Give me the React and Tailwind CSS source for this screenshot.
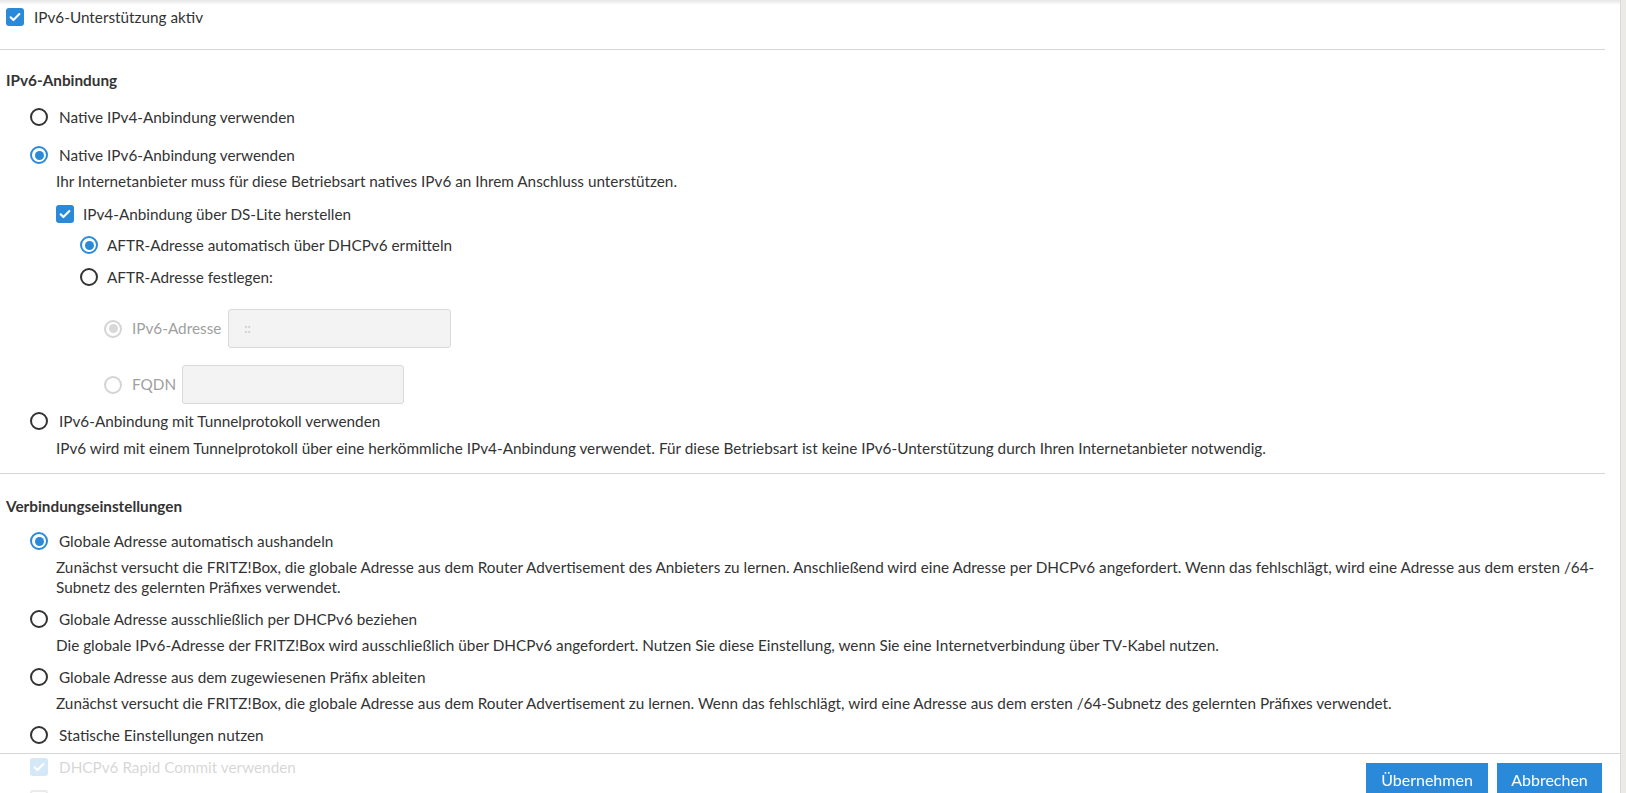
import React from 'react';

const Checkbox = ({ checked = true }) => (
  <span
    className={`flex h-[18px] w-[18px] shrink-0 items-center justify-center rounded-[3px] ${
      checked ? 'bg-[#2a8ad9]' : 'border-2 border-[#9a9a9a] bg-white'
    }`}
  >
    {checked && (
      <svg viewBox="0 0 16 16" className="h-[14px] w-[14px]" fill="none" stroke="white" strokeWidth="2.4" strokeLinecap="round" strokeLinejoin="round">
        <path d="M3 8.3l3.2 3.2L13 4.6" />
      </svg>
    )}
  </span>
);

const Radio = ({ checked = false, disabled = false }) => {
  const ring = disabled ? 'border-[#d4d4d4]' : checked ? 'border-[#2a8ad9]' : 'border-[#333]';
  const dot = disabled ? 'bg-[#d8d8d8]' : 'bg-[#2a8ad9]';
  return (
    <span className={`flex h-[18px] w-[18px] shrink-0 items-center justify-center rounded-full border-2 bg-white ${ring}`}>
      {checked && <span className={`h-[9px] w-[9px] rounded-full ${dot}`} />}
    </span>
  );
};

const Row = ({ className = '', children }) => (
  <div className={`flex h-5 items-center ${className}`}>{children}</div>
);

const Desc = ({ className = '', children }) => (
  <p className={`pl-[56px] leading-5 ${className}`}>{children}</p>
);

export default function App() {
  return (
    <div className="relative flex min-h-screen bg-white font-['Lato','Liberation_Sans',sans-serif] text-[15.3px] text-[#333]">
      <div className="pointer-events-none absolute left-0 right-[6px] top-0 h-[5px] bg-gradient-to-b from-[#e6e6e6] to-transparent" />

      <main className="w-[1605px] shrink-0 pb-[60px]">
        <Row className="mt-[7px] gap-[10px] pl-[6px]">
          <Checkbox />
          <span>IPv6-Unterstützung aktiv</span>
        </Row>

        <hr className="mt-[22px] border-t border-[#d6d6d6]" />

        <h2 className="mt-[20px] pl-[6px] font-bold leading-5">IPv6-Anbindung</h2>

        <Row className="mt-[17px] gap-[11px] pl-[30px]">
          <Radio />
          <span>Native IPv4-Anbindung verwenden</span>
        </Row>
        <Row className="mt-[18px] gap-[11px] pl-[30px]">
          <Radio checked />
          <span>Native IPv6-Anbindung verwenden</span>
        </Row>
        <Desc className="mt-[6px]">Ihr Internetanbieter muss für diese Betriebsart natives IPv6 an Ihrem Anschluss unterstützen.</Desc>

        <Row className="mt-[13px] gap-[9px] pl-[56px]">
          <Checkbox />
          <span>IPv4-Anbindung über DS-Lite herstellen</span>
        </Row>
        <Row className="mt-[11px] gap-[9px] pl-[80px]">
          <Radio checked />
          <span>AFTR-Adresse automatisch über DHCPv6 ermitteln</span>
        </Row>
        <Row className="mt-[12px] gap-[9px] pl-[80px]">
          <Radio />
          <span>AFTR-Adresse festlegen:</span>
        </Row>

        <div className="mt-[22px] flex items-center pl-[104px]">
          <Radio checked disabled />
          <span className="ml-[10px] text-[#a0a0a0]">IPv6-Adresse</span>
          <div className="ml-[7px] flex h-[39px] w-[223px] items-center rounded-[3px] border border-[#d9d9d9] bg-[#f3f3f3] pl-[15px] text-[13px] text-[#c4c4c4]">
            ::
          </div>
        </div>
        <div className="mt-[17px] flex items-center pl-[104px]">
          <Radio disabled />
          <span className="ml-[10px] text-[#a0a0a0]">FQDN</span>
          <div className="ml-[6px] h-[39px] w-[222px] rounded-[3px] border border-[#d9d9d9] bg-[#f3f3f3]" />
        </div>

        <Row className="mt-[7px] gap-[11px] pl-[30px]">
          <Radio />
          <span>IPv6-Anbindung mit Tunnelprotokoll verwenden</span>
        </Row>
        <Desc className="mt-[7px]">
          IPv6 wird mit einem Tunnelprotokoll über eine herkömmliche IPv4-Anbindung verwendet. Für diese Betriebsart ist keine IPv6-Unterstützung durch Ihren Internetanbieter notwendig.
        </Desc>

        <hr className="mt-[15px] border-t border-[#d6d6d6]" />

        <h2 className="mt-[22px] pl-[6px] font-bold leading-5">Verbindungseinstellungen</h2>

        <Row className="mt-[15px] gap-[11px] pl-[30px]">
          <Radio checked />
          <span>Globale Adresse automatisch aushandeln</span>
        </Row>
        <Desc className="mt-[6px]">
          <span className="whitespace-nowrap">
            Zunächst versucht die FRITZ!Box, die globale Adresse aus dem Router Advertisement des Anbieters zu lernen. Anschließend wird eine Adresse per DHCPv6 angefordert. Wenn das fehlschlägt, wird eine Adresse aus dem ersten /64-
          </span>
          <br />
          Subnetz des gelernten Präfixes verwendet.
        </Desc>

        <Row className="mt-[12px] gap-[11px] pl-[30px]">
          <Radio />
          <span>Globale Adresse ausschließlich per DHCPv6 beziehen</span>
        </Row>
        <Desc className="mt-[6px]">
          Die globale IPv6-Adresse der FRITZ!Box wird ausschließlich über DHCPv6 angefordert. Nutzen Sie diese Einstellung, wenn Sie eine Internetverbindung über TV-Kabel nutzen.
        </Desc>

        <Row className="mt-[12px] gap-[11px] pl-[30px]">
          <Radio />
          <span>Globale Adresse aus dem zugewiesenen Präfix ableiten</span>
        </Row>
        <Desc className="mt-[6px]">
          Zunächst versucht die FRITZ!Box, die globale Adresse aus dem Router Advertisement zu lernen. Wenn das fehlschlägt, wird eine Adresse aus dem ersten /64-Subnetz des gelernten Präfixes verwendet.
        </Desc>

        <Row className="mt-[12px] gap-[11px] pl-[30px]">
          <Radio />
          <span>Statische Einstellungen nutzen</span>
        </Row>

        <Row className="mt-[12px] gap-[11px] pl-[30px]">
          <Checkbox />
          <span>DHCPv6 Rapid Commit verwenden</span>
        </Row>
        <Row className="mt-[12px] gap-[11px] pl-[30px]">
          <Checkbox checked={false} />
          <span>Präfix-Delegierung anfordern</span>
        </Row>
      </main>

      <div className="flex-1" />
      <div className="w-[6px] shrink-0 border-l border-[#dcdad6] bg-[#eceae7]" />

      <div className="fixed bottom-0 left-0 right-[6px] flex h-[40px] items-start justify-end gap-[9px] border-t border-[#d6d6d6] bg-white/80 pr-[18px] pt-[9px]">
        <button className="h-[34px] w-[122px] bg-[#2a8ad9] text-[16px] text-white">Übernehmen</button>
        <button className="h-[34px] w-[105px] bg-[#2a8ad9] text-[16px] text-white">Abbrechen</button>
      </div>
    </div>
  );
}
